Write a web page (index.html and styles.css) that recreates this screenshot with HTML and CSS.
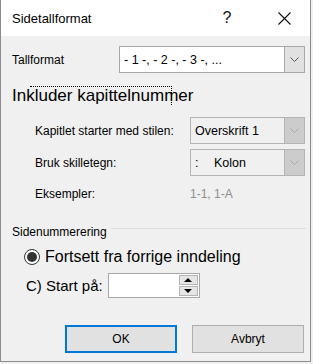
FILE: index.html
```html
<!DOCTYPE html>
<html>
<head>
	<meta charset="UTF-8" />
	<title>Sidetallformat</title>
	<link rel="stylesheet" href="styles.css">
</head>
<body>
	<div class="dialog">
		<!-- Title bar -->
		<div class="titlebar">
			<span class="title">Sidetallformat</span>
			<span class="tb-btn help">?</span>
			<span class="tb-btn close">
				<svg width="13" height="13" viewBox="0 0 13 13"><path d="M0.5 0.5 L12.5 12.5 M12.5 0.5 L0.5 12.5" stroke="#111" stroke-width="1.1" fill="none"/></svg>
			</span>
		</div>
		<!-- Body -->
		<div class="content">
			<div class="row row-format">
				<span class="label">Tallformat</span>
				<div class="select wide">
					<span class="select-text">- 1 -, - 2 -, - 3 -, ...</span>
					<span class="select-arrow">
						<svg width="9" height="5" viewBox="0 0 9 5"><path d="M0.5 0.5 L4.5 4.5 L8.5 0.5" stroke="#555" fill="none"/></svg>
					</span>
				</div>
			</div>

			<div class="heading"><span class="focus"></span>Inkluder kapittelnummer</div>

			<div class="chapter">
				<div class="row row-select">
					<span class="label">Kapitlet starter med stilen:</span>
					<div class="select narrow disabled">
						<span class="select-text">Overskrift 1</span>
						<span class="select-arrow">
							<svg width="9" height="5" viewBox="0 0 9 5"><path d="M0.5 0.5 L4.5 4.5 L8.5 0.5" stroke="#a8a8a8" fill="none"/></svg>
						</span>
					</div>
				</div>
				<div class="row row-select second">
					<span class="label">Bruk skilletegn:</span>
					<div class="select narrow disabled">
						<span class="select-text"><span class="colon">:</span>Kolon</span>
						<span class="select-arrow">
							<svg width="9" height="5" viewBox="0 0 9 5"><path d="M0.5 0.5 L4.5 4.5 L8.5 0.5" stroke="#a8a8a8" fill="none"/></svg>
						</span>
					</div>
				</div>
				<div class="row row-examples">
					<span class="label">Eksempler:</span>
					<span class="examples">1-1, 1-A</span>
				</div>
			</div>

			<div class="group-title">
				<span>Sidenummerering</span>
				<span class="rule"></span>
			</div>

			<div class="row row-radio">
				<span class="radio"><span class="dot"></span></span>
				<span class="radio-label">Fortsett fra forrige inndeling</span>
			</div>

			<div class="row row-start">
				<span class="start-label">C) Start på:</span>
				<div class="spin">
					<span class="spin-field"></span>
					<span class="spin-btns">
						<span class="spin-btn"><span class="tri-up"></span></span>
						<span class="spin-btn"><span class="tri-down"></span></span>
					</span>
				</div>
			</div>

			<div class="buttons">
				<span class="button default">OK</span>
				<span class="button">Avbryt</span>
			</div>
		</div>
	</div>
</body>
</html>
```

FILE: styles.css
```css
	body{
		margin: 0;
		background: #f0f0f0;
		font-family: "Liberation Sans", Arial, sans-serif;
		font-size: 12px;
		color: #000000;
	}

	.dialog{
		width: 311px;
		height: 362px;
		box-sizing: border-box;
		border: 1px solid #8c8c8c;
		border-top: none;
		background: #f0f0f0;
	}

	/* title bar */
	.titlebar{
		display: flex;
		align-items: center;
		height: 36px;
		background: #ffffff;
		padding-left: 11px;
	}

	.title{
		font-size: 13px;
		flex: 1;
	}

	.tb-btn{
		width: 46px;
		height: 36px;
		display: flex;
		align-items: center;
		justify-content: center;
	}

	.help{
		font-size: 16px;
		color: #111;
		margin-right: 11px;
	}

	.close{
		margin-right: 3px;
	}

	/* content */
	.content{
		display: flex;
		flex-direction: column;
		padding: 0 5px 0 11px;
	}

	.row{
		display: flex;
		align-items: center;
	}

	.row-format{
		margin-top: 10px;
		height: 27px;
	}

	.select{
		margin-left: auto;
		display: flex;
		height: 27px;
		box-sizing: border-box;
		border: 1px solid #a8a8a8;
		background: #ffffff;
	}

	.select.wide{
		width: 186px;
	}

	.select.narrow{
		width: 115px;
	}

	.select.disabled{
		background: #f0f0f0;
		border-color: #b4b4b4;
	}

	.select-text{
		flex: 1;
		display: flex;
		align-items: center;
		padding-left: 4px;
		font-size: 12.5px;
	}

	.select-arrow{
		width: 19px;
		display: flex;
		align-items: center;
		justify-content: center;
		background: #e1e1e1;
		border-left: 1px solid #a8a8a8;
	}

	.disabled .select-arrow{
		background: #cccccc;
		border-left-color: #b4b4b4;
	}

	.colon{
		width: 19px;
	}

	.heading{
		position: relative;
		margin-top: 13px;
		height: 20px;
		line-height: 20px;
		font-size: 17px;
	}

	.focus{
		position: absolute;
		left: 18px;
		top: 0;
		width: 142px;
		height: 19px;
		border: 1px dotted #000000;
		border-bottom: none;
		border-left: none;
		box-sizing: border-box;
	}

	.chapter .label{
		padding-left: 23px;
	}

	.row-select{
		margin-top: 11px;
		height: 27px;
	}

	.row-select.second{
		margin-top: 5px;
	}

	.row-examples{
		margin-top: 9px;
		height: 18px;
	}

	.examples{
		width: 115px;
		margin-left: auto;
		color: #8d8d8d;
	}

	.group-title{
		display: flex;
		align-items: center;
		margin-top: 21px;
		height: 16px;
		font-size: 12px;
	}

	.rule{
		flex: 1;
		height: 1px;
		margin-left: 4px;
		margin-right: -1px;
		margin-top: -7px;
		background: #dcdcdc;
	}

	.row-radio{
		margin-top: 7px;
		height: 20px;
	}

	.radio{
		width: 16px;
		height: 16px;
		box-sizing: border-box;
		margin-left: 12px;
		border: 1px solid #333333;
		border-radius: 50%;
		background: #ffffff;
		display: flex;
		align-items: center;
		justify-content: center;
	}

	.dot{
		width: 10px;
		height: 10px;
		border-radius: 50%;
		background: #333333;
	}

	.radio-label{
		margin-left: 5px;
		font-size: 16px;
	}

	.row-start{
		margin-top: 6px;
		height: 24px;
	}

	.start-label{
		margin-left: 14px;
		font-size: 15px;
	}

	.spin{
		margin-left: 5px;
		width: 92px;
		height: 25px;
		box-sizing: border-box;
		border: 1px solid #a8a8a8;
		background: #ffffff;
		display: flex;
	}

	.spin-field{
		flex: 1;
	}

	.spin-btns{
		width: 19px;
		display: flex;
		flex-direction: column;
		gap: 1px;
		padding: 1px 1px 1px 0;
	}

	.spin-btn{
		flex: 1;
		border: 1px solid #b4b4b4;
		background: #e6e6e6;
		display: flex;
		align-items: center;
		justify-content: center;
	}

	.tri-up{
		border-left: 4px solid transparent;
		border-right: 4px solid transparent;
		border-bottom: 4px solid #000000;
	}

	.tri-down{
		border-left: 4px solid transparent;
		border-right: 4px solid transparent;
		border-top: 4px solid #000000;
	}

	.buttons{
		display: flex;
		justify-content: flex-end;
		gap: 15px;
		margin-top: 28px;
		padding-right: 1px;
	}

	.button{
		width: 112px;
		height: 28px;
		box-sizing: border-box;
		border: 1px solid #adadad;
		background: #e1e1e1;
		display: flex;
		align-items: center;
		justify-content: center;
		font-size: 12px;
	}

	.button.default{
		border: 2px solid #0078d7;
	}
```
